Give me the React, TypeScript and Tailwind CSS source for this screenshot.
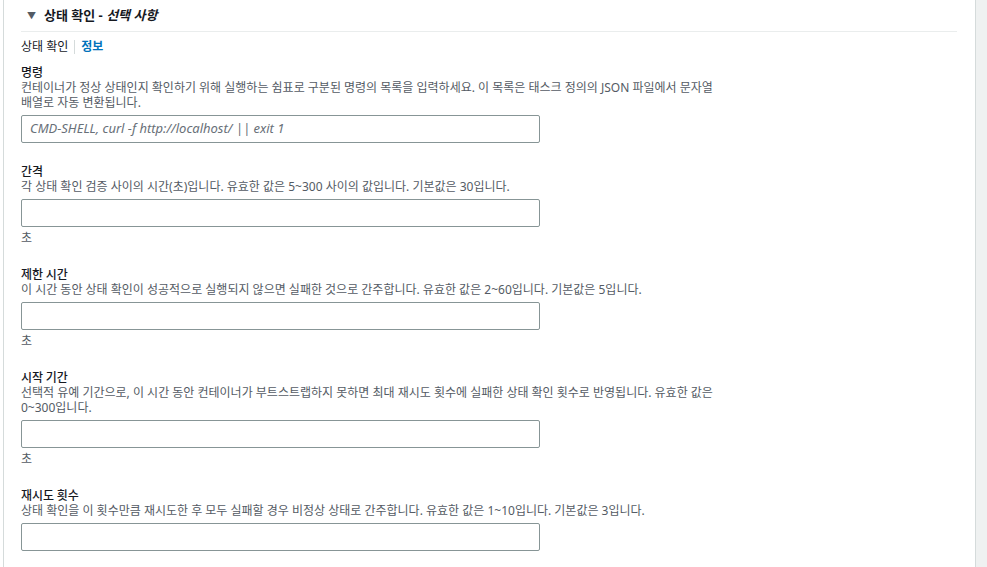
import { ReactNode } from 'react'

const FONT = { fontFamily: '"Noto Sans", "Noto Sans CJK KR", sans-serif' }

interface FieldProps {
  label: string
  description: ReactNode
  placeholder?: string
  suffix?: string
  className?: string
}

function Field({ label, description, placeholder, suffix, className }: FieldProps) {
  return (
    <div className={className}>
      <div className="font-['Noto_Sans_CJK_KR',sans-serif] text-[12px] font-medium leading-4 text-[#16191f]">{label}</div>
      <div className="text-[12px] leading-[15px] text-[#545b64]">{description}</div>
      <div className="mt-[5px] flex h-[28px] w-[519px] items-center rounded-[2px] border border-[#879596] bg-white px-2">
        {placeholder && <span className="text-[13px] italic text-[#687078]">{placeholder}</span>}
      </div>
      {suffix && <div className="mt-[3px] text-[12px] leading-4 text-[#545b64]">{suffix}</div>}
    </div>
  )
}

export default function App() {
  return (
    <div className="flex h-[567px] w-[987px] overflow-hidden bg-white" style={FONT}>
      <div className="w-[3px]" />
      <div className="flex-1 border-x border-[#d5dbdb] bg-white pl-[17px] pr-[18px]">
        <div className="flex h-[32px] items-center gap-[8px] border-b border-[#eaeded] pl-[6px] text-[13px] font-bold text-[#16191f]">
          <span className="text-[9px] text-[#545b64]">▼</span>
          <span>
            상태 확인 - <span className="italic">선택 사항</span>
          </span>
        </div>

        <div className="mt-[7px] flex items-center text-[12px] leading-4 text-[#16191f]">
          <span>상태 확인</span>
          <span className="mx-[6px] h-[14px] w-px bg-[#d5dbdb]" />
          <span className="font-bold text-[#0073bb]">정보</span>
        </div>

        <Field
          className="mt-[9px]"
          label="명령"
          description={
            <>
              컨테이너가 정상 상태인지 확인하기 위해 실행하는 쉼표로 구분된 명령의 목록을 입력하세요. 이 목록은 태스크 정의의 JSON 파일에서 문자열
              <br />
              배열로 자동 변환됩니다.
            </>
          }
          placeholder="CMD-SHELL, curl -f http://localhost/ || exit 1"
        />

        <Field
          className="mt-[20px]"
          label="간격"
          description="각 상태 확인 검증 사이의 시간(초)입니다. 유효한 값은 5~300 사이의 값입니다. 기본값은 30입니다."
          suffix="초"
        />

        <Field
          className="mt-[20px]"
          label="제한 시간"
          description="이 시간 동안 상태 확인이 성공적으로 실행되지 않으면 실패한 것으로 간주합니다. 유효한 값은 2~60입니다. 기본값은 5입니다."
          suffix="초"
        />

        <Field
          className="mt-[20px]"
          label="시작 기간"
          description={
            <>
              선택적 유예 기간으로, 이 시간 동안 컨테이너가 부트스트랩하지 못하면 최대 재시도 횟수에 실패한 상태 확인 횟수로 반영됩니다. 유효한 값은
              <br />
              0~300입니다.
            </>
          }
          suffix="초"
        />

        <Field
          className="mt-[20px]"
          label="재시도 횟수"
          description="상태 확인을 이 횟수만큼 재시도한 후 모두 실패할 경우 비정상 상태로 간주합니다. 유효한 값은 1~10입니다. 기본값은 3입니다."
        />
      </div>
      <div className="w-[11px] bg-[#eff1f1]" />
    </div>
  )
}
